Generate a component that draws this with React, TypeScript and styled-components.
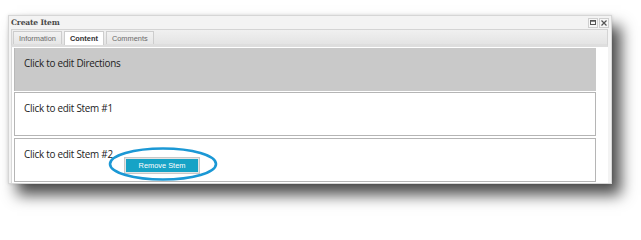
import React from "react";
import styled, { createGlobalStyle } from "styled-components";

const Global = createGlobalStyle`
  html, body { margin: 0; padding: 0; background: #ffffff; }
  body { width: 641px; height: 219px; overflow: hidden; }
`;

const Page = styled.div`
  padding: 15px 29px 0 8px;
`;

const Window = styled.div`
  position: relative;
  height: 169px;
  box-sizing: border-box;
  background: #f3f3f3;
  border: 1px solid #d6d6d6;
  box-shadow: 9px 11px 14px rgba(0, 0, 0, 0.7), 0 0 3px rgba(0, 0, 0, 0.12);
  display: flex;
  flex-direction: column;
  padding: 0 3px 0 2px;
`;

const TitleBar = styled.div`
  height: 13px;
  display: flex;
  align-items: center;
  justify-content: space-between;
`;

const Title = styled.span`
  font-family: "DejaVu Serif", "Liberation Serif", serif;
  font-weight: bold;
  font-size: 7.6px;
  color: #4a4a4a;
  letter-spacing: -0.2px;
`;

const Tools = styled.div`
  display: flex;
  gap: 1px;
  margin-right: -1px;
`;

const ToolBtn = styled.div`
  width: 8px;
  height: 8px;
  border: 1px solid #cfcfcf;
  background: #f7f7f7;
  display: flex;
  align-items: center;
  justify-content: center;
`;

const TabStrip = styled.div`
  height: 18px;
  box-sizing: border-box;
  display: flex;
  align-items: flex-end;
  gap: 2px;
  padding-left: 1px;
  background: linear-gradient(#f0f0f0, #e4e4e4);
  border: 1px solid #d4d4d4;
  border-bottom: 3px solid #dedede;
`;

const Tab = styled.div<{ $active?: boolean }>`
  height: ${(p) => (p.$active ? "14px" : "13px")};
  box-sizing: border-box;
  padding: 0 5px;
  display: flex;
  align-items: center;
  font-family: "Liberation Sans", Arial, sans-serif;
  font-size: 7.4px;
  font-weight: ${(p) => (p.$active ? "bold" : "normal")};
  color: ${(p) => (p.$active ? "#333333" : "#6a6a6a")};
  background: ${(p) => (p.$active ? "#ffffff" : "linear-gradient(#f2f2f2, #e6e6e6)")};
  border: 1px solid #cdcdcd;
  border-bottom: none;
  margin-bottom: ${(p) => (p.$active ? "-1px" : "0")};
`;

const Body = styled.div`
  flex: 1;
  background: #ffffff;
  border-left: 1px solid #d9d9d9;
  padding: 1px 12px 0 2px;
  display: flex;
  flex-direction: column;
  gap: 1px;
  overflow: hidden;
`;

const Directions = styled.div`
  height: 43px;
  flex: none;
  background: #c9c9c9;
  border-left: 1px solid #b8b8b8;
  box-sizing: border-box;
  padding: 5px 0 0 9px;
`;

const StemBox = styled.div`
  position: relative;
  height: 44px;
  flex: none;
  box-sizing: border-box;
  border: 1px solid #b5b5b5;
  padding: 5px 0 0 9px;
  & + & { margin-top: 1px; }
`;

const EditText = styled.span`
  font-family: "Open Sans", "Noto Sans", sans-serif;
  font-size: 9.9px;
  color: #222222;
  letter-spacing: -0.25px;
`;

const RemoveFrame = styled.div`
  position: absolute;
  left: 109px;
  top: 18px;
  padding: 1px;
  background: #e4e4e4;
  border: 1px solid #c8c8c8;
  display: flex;
`;

const RemoveButton = styled.button`
  width: 72px;
  height: 13px;
  padding: 0;
  border: none;
  background: #16a3c6;
  color: #ffffff;
  font-family: "Liberation Sans", Arial, sans-serif;
  font-size: 7.4px;
  line-height: 13px;
`;

const Ring = styled.svg`
  position: absolute;
  left: 99px;
  top: 131px;
  overflow: visible;
`;

export default function App() {
  return (
    <>
      <Global />
      <Page>
        <Window>
          <TitleBar>
            <Title>Create Item</Title>
            <Tools>
              <ToolBtn>
                <svg width="6" height="5" viewBox="0 0 6 5">
                  <rect x="0.5" y="0.5" width="5" height="4" fill="none" stroke="#555" strokeWidth="1" />
                  <line x1="0" y1="1.2" x2="6" y2="1.2" stroke="#555" strokeWidth="1" />
                </svg>
              </ToolBtn>
              <ToolBtn>
                <svg width="6" height="6" viewBox="0 0 6 6">
                  <path d="M0.5 0.5 L5.5 5.5 M5.5 0.5 L0.5 5.5" stroke="#555" strokeWidth="1.2" />
                </svg>
              </ToolBtn>
            </Tools>
          </TitleBar>
          <TabStrip>
            <Tab>Information</Tab>
            <Tab $active>Content</Tab>
            <Tab>Comments</Tab>
          </TabStrip>
          <Body>
            <Directions>
              <EditText>Click to edit Directions</EditText>
            </Directions>
            <StemBox>
              <EditText>Click to edit Stem #1</EditText>
            </StemBox>
            <StemBox>
              <EditText>Click to edit Stem #2</EditText>
              <RemoveFrame>
                <RemoveButton>Remove Stem</RemoveButton>
              </RemoveFrame>
            </StemBox>
          </Body>
          <Ring width="110" height="34" viewBox="0 0 110 34">
            <ellipse cx="55" cy="17" rx="53" ry="15.5" fill="none" stroke="#1b98d5" strokeWidth="2.6" />
          </Ring>
        </Window>
      </Page>
    </>
  );
}
